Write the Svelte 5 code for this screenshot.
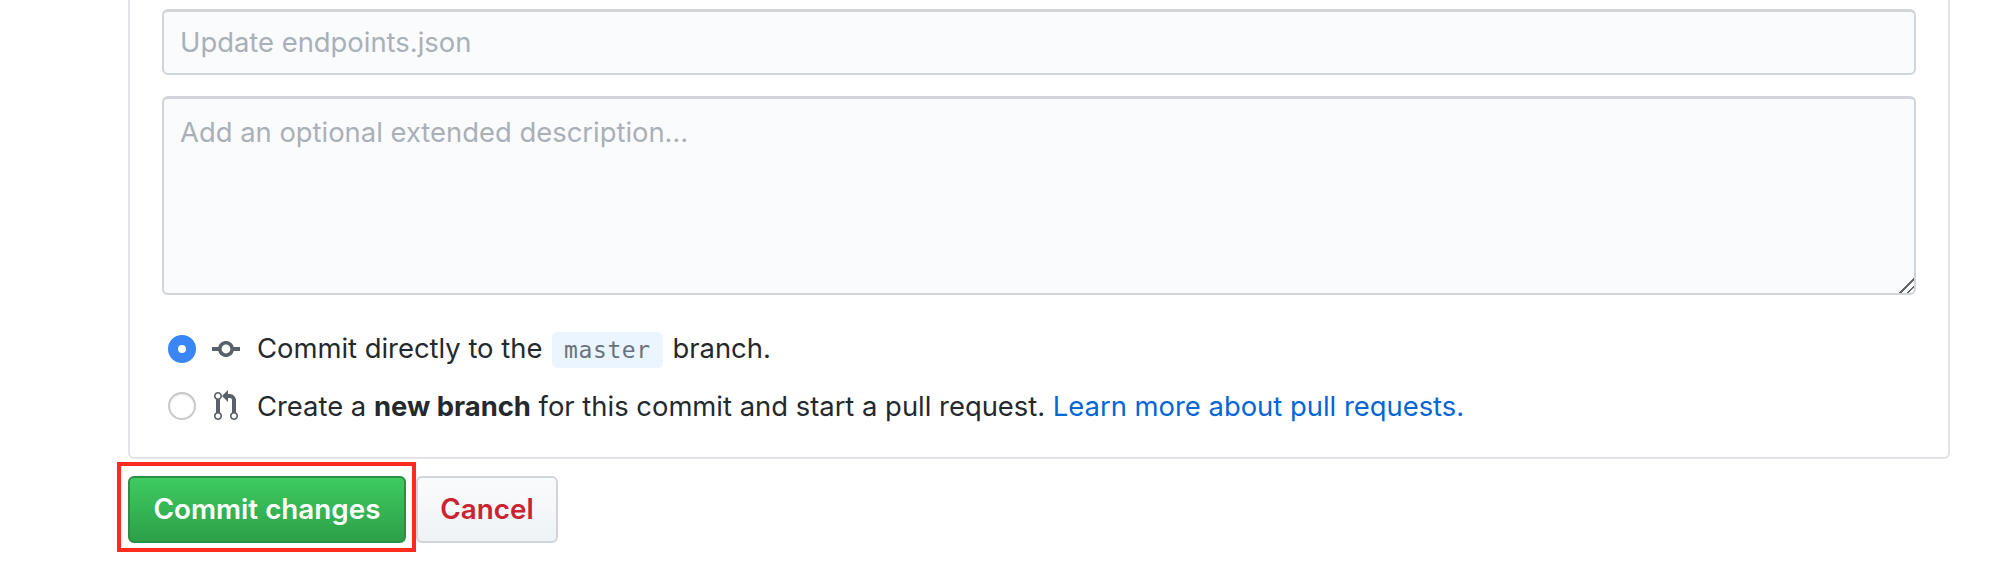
<script>
  const placeholderTitle = 'Update endpoints.json';
  const placeholderBody = 'Add an optional extended description…';
</script>

<div class="page">
  <div class="panel">
    <input class="field title" type="text" placeholder={placeholderTitle} />
    <textarea class="field body" placeholder={placeholderBody}></textarea>

    <div class="choices">
      <label class="choice">
        <input class="radio" type="radio" name="target" checked />
        <svg class="icon" width="28" height="32" viewBox="0 0 14 16">
          <path fill-rule="evenodd" d="M10.86 7c-.45-1.72-2-3-3.86-3-1.86 0-3.41 1.28-3.86 3H0v2h3.14c.45 1.72 2 3 3.86 3 1.86 0 3.41-1.28 3.86-3H14V7h-3.14zM7 10.2c-1.22 0-2.2-.98-2.2-2.2 0-1.22.98-2.2 2.2-2.2 1.22 0 2.2.98 2.2 2.2 0 1.22-.98 2.2-2.2 2.2z" />
        </svg>
        <span>Commit directly to the <code>master</code> branch.</span>
      </label>
      <label class="choice">
        <input class="radio" type="radio" name="target" />
        <svg class="icon" width="28" height="32" viewBox="-1 0 14 16">
          <path fill-rule="evenodd" d="M11 11.28V5c-.03-.78-.34-1.47-.94-2.06C9.46 2.35 8.78 2.03 8 2H7V0L4 3l3 3V4h1c.27.02.48.11.69.31.21.2.3.42.31.69v6.28A1.993 1.993 0 0 0 10 15a1.993 1.993 0 0 0 1-3.72zm-1 2.92c-.66 0-1.2-.55-1.2-1.2 0-.65.55-1.2 1.2-1.2.65 0 1.2.55 1.2 1.2 0 .65-.55 1.2-1.2 1.2zM4 3c0-1.11-.89-2-2-2a1.993 1.993 0 0 0-1 3.72v6.56A1.993 1.993 0 0 0 2 15a1.993 1.993 0 0 0 1-3.72V4.72c.59-.34 1-.98 1-1.72zm-.8 10c0 .66-.55 1.2-1.2 1.2-.65 0-1.2-.55-1.2-1.2 0-.65.55-1.2 1.2-1.2.65 0 1.2.55 1.2 1.2zM2 4.2C1.34 4.2.8 3.65.8 3c0-.65.55-1.2 1.2-1.2.65 0 1.2.55 1.2 1.2 0 .65-.55 1.2-1.2 1.2z" />
        </svg>
        <span>Create a <strong>new branch</strong> for this commit and start a pull request. <a href="#pulls">Learn more about pull requests.</a></span>
      </label>
    </div>
  </div>

  <div class="actions">
    <button class="btn primary">Commit changes</button>
    <button class="btn cancel">Cancel</button>
    <span class="highlight"></span>
  </div>
</div>

<style>
  :global(body) {
    background: #fff;
  }
  .page {
    height: 570px;
    padding: 0 52px 0 128px;
    box-sizing: border-box;
    font-family: Inter, "Liberation Sans", sans-serif;
    font-size: 27.4px;
    color: #24292e;
  }
  .panel {
    display: flex;
    flex-direction: column;
    height: 459px;
    box-sizing: border-box;
    padding: 9px 32px 0 32px;
    border: 2px solid #e1e4e8;
    border-top: 0;
    border-radius: 0 0 6px 6px;
  }
  .field {
    display: block;
    width: 100%;
    box-sizing: border-box;
    padding: 0 16px;
    border: 3px solid #d1d5da;
    border-width: 3px 2px 2px;
    border-radius: 6px;
    background: #fafbfc;
    font: inherit;
    color: #24292e;
    outline: none;
  }
  .field::placeholder {
    color: #a9b0b8;
    opacity: 1;
  }
  .title {
    height: 66px;
    padding-bottom: 1px;
  }
  .body {
    height: 199px;
    margin-top: 21px;
    padding-top: 15px;
    line-height: 36px;
  }
  .body::-webkit-resizer {
    background: linear-gradient(135deg, transparent 50%, #666 50%, #666 57%, transparent 57%, transparent 76%, #666 76%, #666 83%, transparent 83%);
  }
  .choices {
    display: flex;
    flex-direction: column;
    gap: 25px;
    margin-top: 38px;
  }
  .choice {
    display: flex;
    align-items: center;
    height: 32px;
    padding-left: 6px;
    white-space: nowrap;
  }
  .radio {
    appearance: none;
    flex: none;
    width: 28px;
    height: 28px;
    margin: 0 16px 0 0;
    border: 2px solid #c9c9c9;
    border-radius: 50%;
    background: #fff;
    box-shadow: inset 0 1px 2px rgba(0, 0, 0, 0.08);
  }
  .radio:checked {
    border: 10px solid #3b86f7;
    box-shadow: none;
  }
  .icon {
    flex: none;
    margin-right: 17px;
    fill: #586069;
  }
  code {
    display: inline-block;
    margin: 0 2px;
    padding: 0 12px;
    border-radius: 5px;
    background: #eaf5ff;
    font-family: "DejaVu Sans Mono", monospace;
    font-size: 23px;
    letter-spacing: 0.6px;
    line-height: 36px;
    color: #6a737d;
  }
  strong {
    font-weight: 700;
  }
  a {
    color: #0366d6;
    text-decoration: none;
  }
  .actions {
    position: relative;
    display: flex;
    gap: 10px;
    margin-top: 17px;
  }
  .btn {
    height: 67px;
    box-sizing: border-box;
    padding-bottom: 3px;
    border-radius: 6px;
    font: inherit;
    font-size: 27.8px;
    font-weight: 600;
  }
  .primary {
    width: 278px;
    border: 2px solid #2a8f45;
    background: linear-gradient(#3ecb60, #2d9f48);
    color: #fff;
  }
  .cancel {
    width: 142px;
    border: 2px solid #d1d5da;
    background: linear-gradient(#fafbfc, #eff3f6);
    color: #cb2431;
  }
  .highlight {
    position: absolute;
    left: -11px;
    top: -14px;
    width: 299px;
    height: 90px;
    box-sizing: border-box;
    border: 4px solid #fb2c1f;
    pointer-events: none;
  }
</style>
